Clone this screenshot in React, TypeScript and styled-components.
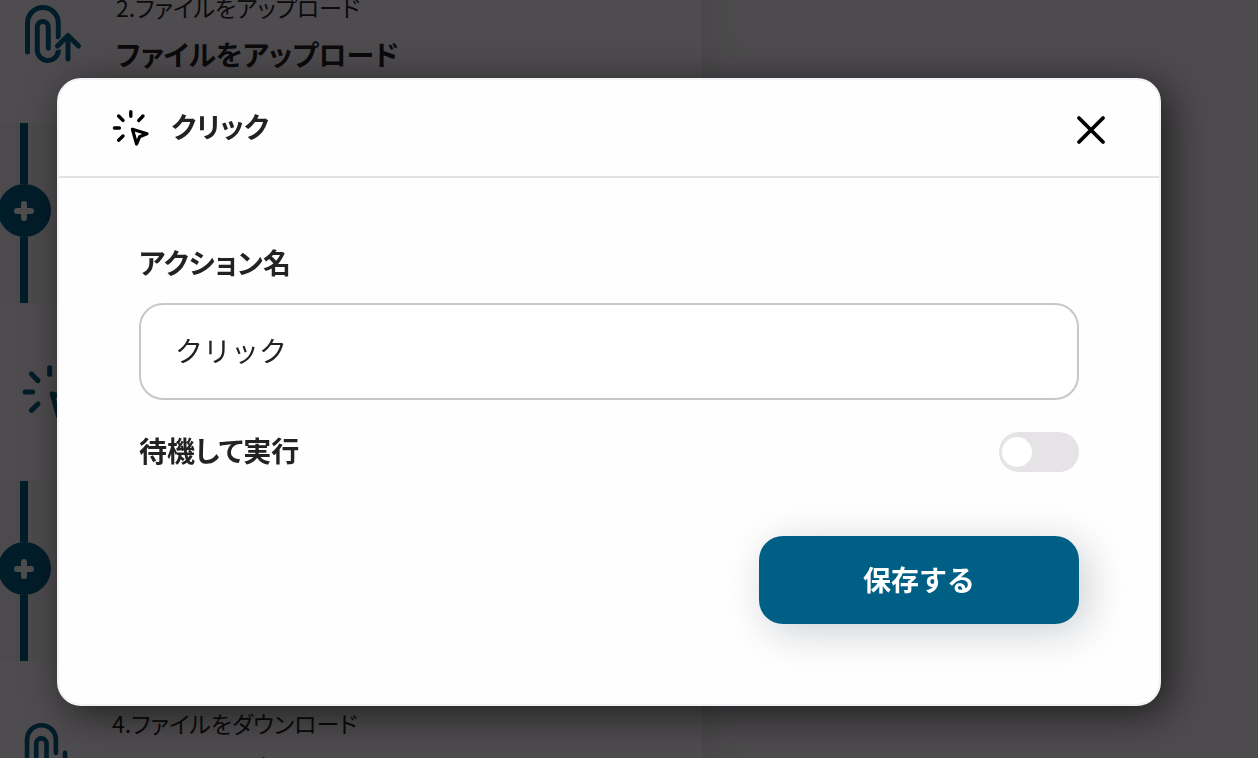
import React, { useState } from "react";
import styled, { createGlobalStyle } from "styled-components";

const GlobalStyle = createGlobalStyle`
  *, *::before, *::after { box-sizing: border-box; }
  body {
    margin: 0;
    overflow: hidden;
    background: #faf7fa;
    color: #222;
    font-family: "Noto Sans CJK JP", "Noto Sans", sans-serif;
    font-size: 28px;
    font-feature-settings: "palt";
  }
`;

const Page = styled.div`
  height: 100vh;
  overflow: hidden;
`;

const Flow = styled.main`
  width: 56%;
  max-width: 702px;
  margin-top: -55px;
  background: #f9f6f9;
  box-shadow: 0 0 40px rgba(0, 0, 0, 0.1);
`;

const StepCard = styled.section`
  display: flex;
  align-items: center;
  gap: 32px;
  height: 178px;
  padding-left: 20px;
  background: #fffcff;

  svg { flex: none; color: #005f85; }
`;

const StepText = styled.div`
  display: flex;
  flex-direction: column;
  gap: 4px;
  padding-bottom: 4px;
`;

const StepNumber = styled.p`
  margin: 0;
  font-size: 23px;
  line-height: 40px;
`;

const StepTitle = styled.h3`
  margin: 0;
  font-size: 28px;
  font-weight: 700;
  line-height: 46px;
`;

const Connector = styled.div`
  display: flex;
  flex-direction: column;
  align-items: center;
  width: 48px;
  height: 180px;

  &::before, &::after {
    content: "";
    width: 8px;
    background: #005f85;
  }

  &::before { height: 61px; }
  &::after { flex: 1; }
`;

const AddButton = styled.button`
  display: grid;
  place-items: center;
  flex: none;
  width: 53px;
  height: 53px;
  padding: 0;
  border: 0;
  border-radius: 50%;
  background: #005f85;
  color: #fff;
`;

const Overlay = styled.div`
  position: fixed;
  inset: 0;
  display: flex;
  align-items: flex-start;
  padding: 78px 97px 52px 57px;
  background: rgba(3, 1, 3, 0.7);
`;

const Dialog = styled.div`
  flex: 1;
  border: 2px solid #f2f1f4;
  border-radius: 24px;
  background: #fefefe;
  box-shadow: 8px 8px 40px rgba(0, 0, 0, 0.6);
`;

const DialogHeader = styled.header`
  display: flex;
  align-items: center;
  gap: 20px;
  height: 98px;
  padding: 0 48px 0 52px;
  border-bottom: 2px solid #e2e2e2;
  color: #000;
`;

const DialogTitle = styled.h2`
  flex: 1;
  margin: 0;
  padding-bottom: 4px;
  color: #222;
  font-size: 28px;
  font-weight: 700;
  line-height: 36px;
`;

const CloseButton = styled.button`
  display: grid;
  place-items: end center;
  width: 40px;
  height: 36px;
  padding: 0;
  border: 0;
  background: none;
  color: #000;
`;

const DialogForm = styled.form`
  display: flex;
  flex-direction: column;
  padding: 66px 80px 80px;
`;

const Label = styled.label`
  padding-bottom: 4px;
  color: #222;
  font-size: 28px;
  font-weight: 700;
  line-height: 36px;
`;

const TextField = styled.input`
  width: 100%;
  height: 97px;
  margin-top: 19px;
  padding: 0 34px 3px;
  border: 2px solid #c8c7c9;
  border-radius: 24px;
  outline: 0;
  background: #fff;
  color: #222;
  font-family: inherit;
  font-size: 28px;
`;

const SwitchRow = styled.div`
  display: flex;
  align-items: center;
  justify-content: space-between;
  margin-top: 32px;
`;

const Switch = styled.input`
  appearance: none;
  display: flex;
  align-items: center;
  width: 80px;
  height: 40px;
  margin: 0;
  padding: 0 3px;
  border-radius: 20px;
  background: #e5e3e6;

  &::before {
    content: "";
    width: 30px;
    height: 30px;
    border-radius: 50%;
    background: #fff;
  }

  &:checked { justify-content: flex-end; background: #005f85; }
`;

const SaveButton = styled.button`
  align-self: flex-end;
  width: 320px;
  height: 88px;
  margin-top: 64px;
  padding: 0 0 3px;
  border: 0;
  border-radius: 24px;
  background: #005f85;
  box-shadow: 8px 8px 40px rgba(10, 20, 40, 0.2);
  color: #fff;
  font-family: inherit;
  font-size: 28px;
  font-weight: 700;
`;

const ClickIcon = ({ size }: { size: number }) => (
  <svg width={size} height={size} viewBox="0 0 40 40" fill="none" stroke="currentColor" strokeWidth="3.4" strokeLinecap="round" aria-hidden="true">
    <path d="M19.8 3.8v4.4M7.6 8l4.4 4.4M32 8l-4.2 4.4M3.4 20h5M7.6 32.2l4.4-4.2" />
    <path d="M21.4 21.2l14.6 4.6-7.4 3-3 7.2z" strokeWidth="3.2" strokeLinejoin="round" />
  </svg>
);

const Clip = () => (
  <path d="M7.5 48V19a15.4 15.4 0 0 1 30.8 0v14M28.3 44V23a5.5 5.5 0 0 0-11 0v22a10.5 10.5 0 0 0 21 2" />
);

const UploadIcon = () => (
  <svg width="64" height="60" viewBox="0 0 64 60" fill="none" stroke="currentColor" strokeWidth="5" strokeLinecap="round" strokeLinejoin="round" aria-hidden="true">
    <Clip />
    <path d="M48 32v23M37.5 42L48 31.5 58.5 42" stroke="#fff" strokeWidth="8" />
    <path d="M48 32v23M37.5 42L48 31.5 58.5 42" />
  </svg>
);

const DownloadIcon = () => (
  <svg width="60" height="60" viewBox="0 -2 64 64" fill="none" stroke="currentColor" strokeWidth="5" strokeLinecap="round" strokeLinejoin="round" aria-hidden="true">
    <Clip />
    <path d="M48 33v23M37.5 46L48 56.5 58.5 46" stroke="#fff" strokeWidth="8" />
    <path d="M48 33v23M37.5 46L48 56.5 58.5 46" />
  </svg>
);

const PlusIcon = () => (
  <svg width="24" height="24" viewBox="0 0 24 24" fill="none" stroke="currentColor" strokeWidth="6" strokeLinecap="round" aria-hidden="true">
    <path d="M12 5v14M5 12h14" />
  </svg>
);

const CloseIcon = () => (
  <svg width="32" height="32" viewBox="0 0 32 32" fill="none" stroke="currentColor" strokeWidth="3.8" strokeLinecap="round" aria-hidden="true">
    <path d="M4 4l24 24M28 4L4 28" />
  </svg>
);

interface StepProps {
  icon: React.ReactNode;
  number: number;
  title: string;
}

const Step = ({ icon, number, title }: StepProps) => (
  <StepCard>
    {icon}
    <StepText>
      <StepNumber>{number}.{title}</StepNumber>
      <StepTitle>{title}</StepTitle>
    </StepText>
  </StepCard>
);

const AddStep = () => (
  <Connector>
    <AddButton type="button" aria-label="追加">
      <PlusIcon />
    </AddButton>
  </Connector>
);

export default function App() {
  const [name, setName] = useState("クリック");
  const [wait, setWait] = useState(false);

  return (
    <>
      <GlobalStyle />
      <Page>
        <Flow>
          <Step icon={<UploadIcon />} number={2} title="ファイルをアップロード" />
          <AddStep />
          <Step icon={<ClickIcon size={60} />} number={3} title="クリック" />
          <AddStep />
          <Step icon={<DownloadIcon />} number={4} title="ファイルをダウンロード" />
        </Flow>
      </Page>
      <Overlay>
        <Dialog role="dialog" aria-modal="true" aria-labelledby="dialog-title">
          <DialogHeader>
            <ClickIcon size={40} />
            <DialogTitle id="dialog-title">クリック</DialogTitle>
            <CloseButton type="button" aria-label="閉じる">
              <CloseIcon />
            </CloseButton>
          </DialogHeader>
          <DialogForm onSubmit={(e) => e.preventDefault()}>
            <Label htmlFor="action-name">アクション名</Label>
            <TextField id="action-name" type="text" value={name} onChange={(e) => setName(e.target.value)} />
            <SwitchRow>
              <Label htmlFor="wait">待機して実行</Label>
              <Switch id="wait" type="checkbox" role="switch" checked={wait} onChange={(e) => setWait(e.target.checked)} />
            </SwitchRow>
            <SaveButton type="submit">保存する</SaveButton>
          </DialogForm>
        </Dialog>
      </Overlay>
    </>
  );
}
